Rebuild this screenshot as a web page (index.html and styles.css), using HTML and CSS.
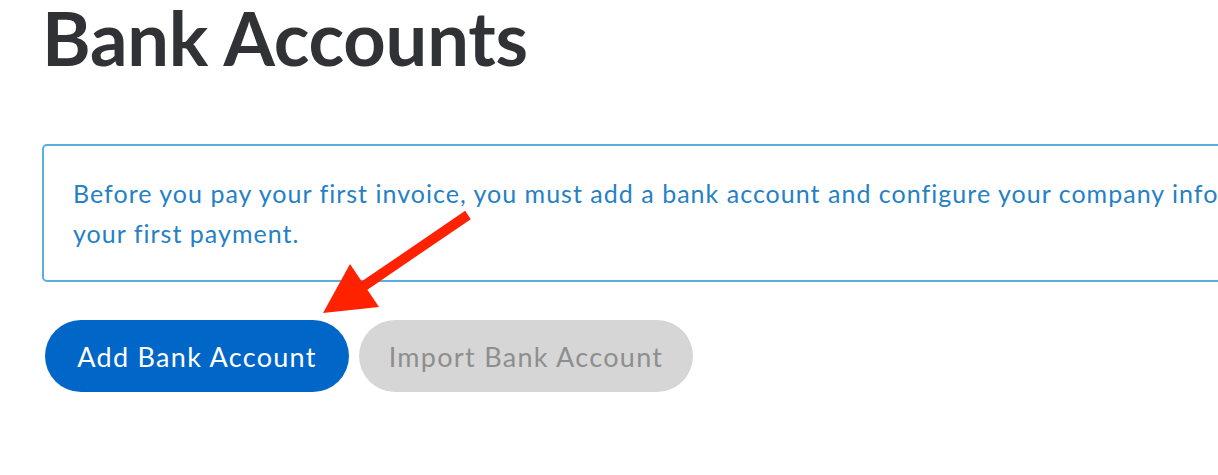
FILE: index.html
```html
<!DOCTYPE html>
<html lang="en">
<head>
<meta charset="utf-8">
<title>Bank Accounts</title>
<link rel="stylesheet" href="styles.css">
</head>
<body>
<main class="page">
  <h1 class="title">Bank Accounts</h1>
  <div class="notice">
    <p class="notice-text">Before you pay your first invoice, you must add a bank account and configure your company information before making<br>your first payment.</p>
  </div>
  <div class="actions">
    <button class="btn btn-primary" type="button">Add Bank Account</button>
    <button class="btn btn-disabled" type="button">Import Bank Account</button>
  </div>
  <svg class="arrow" width="200" height="130" viewBox="300 200 200 130" aria-hidden="true">
    <line x1="468" y1="215" x2="358" y2="290" stroke="#ff2200" stroke-width="10"/>
    <polygon points="323,313 350,264 379,307" fill="#ff2200"/>
  </svg>
</main>
</body>
</html>
```

FILE: styles.css
```css
html, body {
  margin: 0;
  padding: 0;
  overflow: hidden;
  background: #ffffff;
}

.page {
  position: relative;
  padding: 0 0 0 42px;
  font-family: Lato, "Open Sans", sans-serif;
}

.title {
  margin: 0;
  padding-top: 1px;
  font-size: 74px;
  line-height: 74px;
  font-weight: 700;
  color: #303236;
  letter-spacing: -0.2px;
}

.notice {
  margin-top: 69px;
  width: 1500px;
  height: 134px;
  border: 2px solid #5aaee0;
  border-radius: 5px;
  box-sizing: content-box;
  padding: 0 0 0 29px;
}

.notice-text {
  margin: 0;
  padding-top: 27px;
  font-size: 25px;
  line-height: 40px;
  letter-spacing: 1.02px;
  color: #2581c4;
  white-space: nowrap;
}

.actions {
  display: flex;
  gap: 10px;
  margin-top: 38px;
  margin-left: 3px;
}

.btn {
  height: 72px;
  border: none;
  border-radius: 36px;
  font-family: Lato, "Open Sans", sans-serif;
  font-size: 27px;
  letter-spacing: 1.3px;
  padding: 0;
  cursor: pointer;
}

.btn-primary {
  width: 304px;
  background: #0066c8;
  color: #ffffff;
}

.btn-disabled {
  width: 334px;
  background: #d6d6d6;
  color: #8e8e8e;
}

.arrow {
  position: absolute;
  left: 300px;
  top: 200px;
}
```
